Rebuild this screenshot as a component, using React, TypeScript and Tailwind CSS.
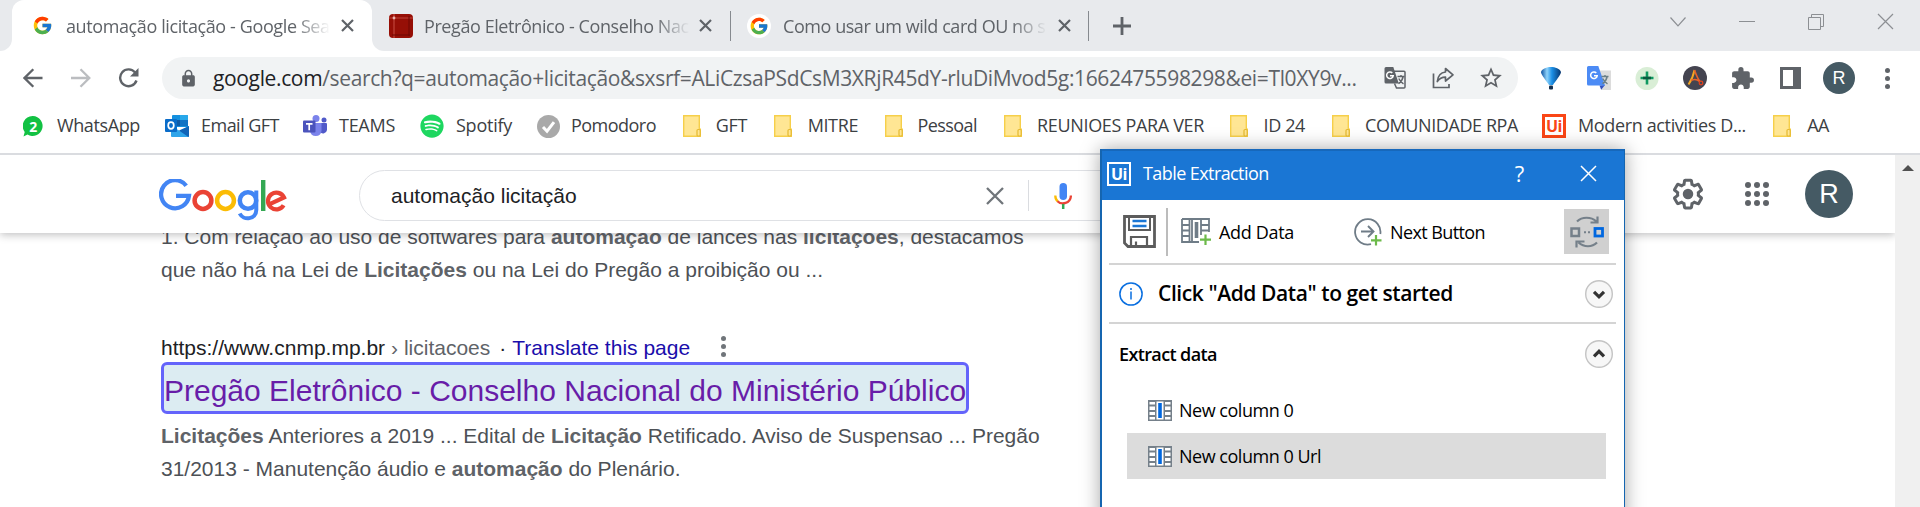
import type { ReactNode } from "react";
import { FcGoogle } from "react-icons/fc";
import { FaSpotify } from "react-icons/fa";
import { MdExtension, MdLock, MdStarBorder } from "react-icons/md";

const ui = "font-['Open_Sans',sans-serif] whitespace-nowrap";
const web = "font-['Liberation_Sans',Arial,sans-serif] whitespace-nowrap";

function Cross({ size, width, className }: { size: number; width: number; className?: string }) {
  return (
    <svg width={size} height={size} viewBox={`0 0 ${size} ${size}`} className={`shrink-0 ${className ?? ""}`}>
      <path d={`M1 1L${size - 1} ${size - 1}M${size - 1} 1L1 ${size - 1}`} stroke="currentColor" strokeWidth={width} />
    </svg>
  );
}

function TabTitle({ children, className }: { children: ReactNode; className: string }) {
  return (
    <span
      className={`${ui} text-[18px] leading-7 text-[#5f6368] [mask-image:linear-gradient(to_right,black_calc(100%-36px),transparent)] ${className}`}
    >
      {children}
    </span>
  );
}

function TabStrip() {
  return (
    <div className="flex h-[51px] bg-[#e8eaed]">
      <div className="flex w-3 items-end bg-white">
        <div className="h-full w-3 rounded-br-xl bg-[#e8eaed]" />
      </div>
      <div className="w-[360px] bg-[#e8eaed]">
        <div className="flex h-full items-center rounded-t-xl bg-white pl-[20px]">
          <FcGoogle size={21} className="shrink-0" />
          <TabTitle className="ml-[13px] w-[264px] tracking-[-0.39px]">automação licitação - Google Sea</TabTitle>
          <Cross size={13} width={2.2} className="ml-[11px] text-[#5f6368]" />
        </div>
      </div>
      <div className="flex flex-1 bg-white">
        <div className="flex flex-1 items-center rounded-bl-xl bg-[#e8eaed]">
          <svg width="24" height="24" viewBox="0 0 24 24" className="ml-[17px] shrink-0">
            <rect width="24" height="24" rx="4" fill="#960f06" />
            <path d="M0 4h24M5 0v24" stroke="#c0453a" strokeWidth="1.2" />
            <path d="M20 2v20M3 21h18" stroke="#6d0903" strokeWidth="1" />
            <circle cx="5" cy="4" r="1.4" fill="#eab4ae" />
          </svg>
          <TabTitle className="ml-[11px] w-[266px] tracking-[-0.42px]">Pregão Eletrônico - Conselho Nac</TabTitle>
          <Cross size={13} width={2.2} className="ml-[9px] text-[#5f6368]" />
          <div className="ml-[18px] h-[30px] w-px bg-[#868a8f]" />
          <div className="ml-[16px] flex size-6 items-center justify-center rounded-full bg-white">
            <FcGoogle size={20} />
          </div>
          <TabTitle className="ml-[12px] w-[264px] tracking-[-0.44px]">Como usar um wild card OU no s</TabTitle>
          <Cross size={13} width={2.2} className="ml-[11px] text-[#5f6368]" />
          <div className="ml-[17px] h-[30px] w-px bg-[#868a8f]" />
          <svg width="18" height="18" viewBox="0 0 18 18" className="ml-[24px]">
            <path d="M9 0v18M0 9h18" stroke="#5f6368" strokeWidth="2.8" />
          </svg>
          <div className="mr-[26px] mb-2 ml-auto flex items-center text-[#8c8f93]">
            <svg width="16" height="10" viewBox="0 0 16 10" fill="none" stroke="currentColor">
              <path d="M.5 .5L8 8.8L15.5 .5" strokeWidth="1.2" />
            </svg>
            <div className="ml-[53px] h-px w-4 bg-[#8c8f93]" />
            <svg width="16" height="16" viewBox="0 0 16 16" fill="none" stroke="currentColor" className="ml-[53px]">
              <path d="M.5 3.5h12v12H.5zM3.5 3V.5h12v12H13" />
            </svg>
            <Cross size={17} width={1.2} className="ml-[53px]" />
          </div>
        </div>
      </div>
    </div>
  );
}

function TranslateIcon({ color }: { color: boolean }) {
  const front = color ? "#4c8bf5" : "#5f6368";
  return (
    <svg width="24" height="24" viewBox="0 0 24 24" className="shrink-0">
      {color ? (
        <>
          <path d="M10 4.5H24V24H14.5z" fill="#dcdcdc" />
          <path d="M12.5 19.5L18 19l-3.800 4.800z" fill="#3452c0" />
        </>
      ) : (
        <path d="M11 5.200h10a1 1 0 011 1V21a1 1 0 01-1 1h-7.500l-2-4.500" fill="none" stroke="#5f6368" strokeWidth="1.500" />
      )}
      <path d={color ? "M1.500 0h9.800l6.700 19.500H1.500A1.500 1.500 0 010 18V1.500A1.500 1.500 0 011.500 0z" : "M3 1h7.300l5.500 16.500H3A1.500 1.500 0 011.500 16V2.500A1.500 1.500 0 013 1z"} fill={front} />
      <path d="M9.300 6.900A3.300 3.300 0 1010.200 9.800H7" fill="none" stroke="#fff" strokeWidth="1.500" />
      <path d="M14.500 10.500h7M18 9v1.500M20.200 10.500c-.6 3-2.200 5.500-4.700 7.200M15.800 12.500c.9 2.200 2.600 4 4.700 5.300" fill="none" stroke={color ? "#6b7f86" : "#5f6368"} strokeWidth="1.400" />
    </svg>
  );
}

function Toolbar() {
  return (
    <div className="flex h-[54px] items-center bg-white text-[#5f6368]">
      <svg width="20" height="20" viewBox="0 0 20 20" fill="none" stroke="#5f6368" strokeWidth="2.300" className="ml-[23px]">
        <path d="M19.500 10H1.500M10.300 1.200L1.500 10l8.800 8.800" />
      </svg>
      <svg width="20" height="20" viewBox="0 0 20 20" fill="none" stroke="#bbbdc0" strokeWidth="2.300" className="ml-[28px]">
        <path d="M0 10h18M9.500 1.200L18.300 10l-8.800 8.800" />
      </svg>
      <svg width="21" height="20" viewBox="0 0 21 20" fill="none" className="ml-[27px]">
        <path d="M17.200 4.600A8.400 8.400 0 1018.500 12.500" stroke="#5f6368" strokeWidth="2.400" />
        <path d="M20.500 0v8.500H12z" fill="#5f6368" />
      </svg>
      <div className="ml-[23px] flex h-[42px] w-[1356px] items-center rounded-full bg-[#f1f3f4]">
        <MdLock size={19} className="ml-[17px] shrink-0" />
        <span className={`${ui} ml-[15px] w-[1164px] text-[21px] leading-[42px] tracking-[-0.36px] text-[#5f6368]`}>
          <span className="text-[#202124]">google.com</span>
          /search?q=automação+licitação&amp;sxsrf=ALiCzsaPSdCsM3XRjR45dY-rluDiMvod5g:1662475598298&amp;ei=Tl0XY9v...
        </span>
        <div className="ml-[6px] flex items-center">
          <TranslateIcon color={false} />
          <svg width="24" height="24" viewBox="0 0 24 24" fill="none" stroke="#5f6368" strokeWidth="1.700" className="ml-[24px]">
            <path d="M2.500 7.500v14h15.500v-3.500" />
            <path d="M14.500 2.500l7.500 6.300-7.500 6.200v-3.800c-3.800 0-6.300 1.500-8.200 4.300.5-4.800 3-9 8.200-9.500z" strokeLinejoin="round" />
          </svg>
          <MdStarBorder size={26} className="ml-[23px]" />
        </div>
      </div>
      <svg width="22" height="24" viewBox="0 0 22 24" className="ml-[22px] shrink-0">
        <defs>
          <linearGradient id="balloon">
            <stop offset="0" stopColor="#0b4f9e" />
            <stop offset=".3" stopColor="#8fd3fb" />
            <stop offset=".55" stopColor="#1b8fe6" />
            <stop offset="1" stopColor="#06356f" />
          </linearGradient>
        </defs>
        <path d="M1 6C2 2.500 7 1 11 1s9 1.500 10 5c0 3-6 9.500-8 13H9C7 15.500 1 9 1 6z" fill="url(#balloon)" />
        <rect x="9" y="19.500" width="4" height="4" rx="1" fill="#15304f" />
      </svg>
      <div className="ml-[25px]">
        <TranslateIcon color />
      </div>
      <svg width="24" height="24" viewBox="0 0 24 24" className="ml-[24px] shrink-0">
        <circle cx="12" cy="12.500" r="11.500" fill="#d9eed6" />
        <path d="M12 5.500v13M5.500 12h13" stroke="#0f9960" strokeWidth="2.600" />
        <path d="M8 12h8" stroke="#0b5a40" strokeWidth="2.600" />
      </svg>
      <svg width="24" height="24" viewBox="0 0 24 24" fill="none" className="ml-[24px] shrink-0">
        <circle cx="12" cy="12" r="12" fill="#444450" />
        <path d="M5.500 18.500C8 15 10.500 9 11.500 4" stroke="#f5a623" strokeWidth="1.900" />
        <path d="M11.500 4c1.500 4.500 3 8.500 5.500 11.500M8 14.500c3-1.500 6-1.300 8.500 1" stroke="#e8622a" strokeWidth="1.600" />
        <circle cx="18" cy="17" r="1.800" stroke="#e0421f" strokeWidth="1.300" />
      </svg>
      <MdExtension size={25} className="ml-[23px] shrink-0" />
      <div className="ml-[25px] h-[22px] w-[21px] shrink-0 border-[3px] border-r-[8px] border-[#5f6368] bg-white" />
      <div className={`ml-[22px] flex size-8 shrink-0 items-center justify-center rounded-full bg-[#455a64] text-[18px] text-white ${web}`}>R</div>
      <div className="ml-[30px] flex flex-col gap-[3px]">
        <i className="size-[5px] rounded-full bg-[#5f6368]" />
        <i className="size-[5px] rounded-full bg-[#5f6368]" />
        <i className="size-[5px] rounded-full bg-[#5f6368]" />
      </div>
    </div>
  );
}

function Folder() {
  return (
    <svg width="18" height="22" viewBox="0 0 18 22" className="shrink-0">
      <path d="M.7.700h15.600v13.500h1v7H.7z" fill="#ffe694" stroke="#f6cf4a" strokeWidth="1.400" />
      <rect x="14" y="14.500" width="3.200" height="6.500" rx="1" fill="#ffe694" stroke="#e5b931" strokeWidth="1.200" />
    </svg>
  );
}

function Bookmark({ icon, label, className }: { icon: ReactNode; label: string; className: string }) {
  return (
    <div className={`flex shrink-0 items-center justify-between ${className}`}>
      {icon}
      <span className={`${ui} pb-[2px] text-[18px] text-[#3c4043]`}>{label}</span>
    </div>
  );
}

function BookmarksBar() {
  return (
    <div className="flex h-[48px] items-center bg-white pb-[6px] pl-[23px]">
      <Bookmark
        className="w-[117px] tracking-[-0.38px]"
        label="WhatsApp"
        icon={
          <svg width="20" height="21" viewBox="0 0 20 21">
            <path d="M10 0a10 10 0 11-5.500 18.600L.5 20.500l1.200-4.600A10 10 0 0110 0z" fill="#12c143" />
            <text x="10" y="15.500" textAnchor="middle" fontSize="14" fontWeight="700" fontFamily="Open Sans" fill="#fff">2</text>
          </svg>
        }
      />
      <Bookmark
        className="ml-[25px] w-[114px] tracking-[-0.53px]"
        label="Email GFT"
        icon={
          <svg width="24" height="22" viewBox="0 0 24 22">
            <path d="M7 1a1 1 0 011-1h14a1 1 0 011 1v11H7z" fill="#1490df" />
            <path d="M15 0h7a1 1 0 011 1v4h-8z" fill="#28a8ea" />
            <path d="M7 5h8v6H7z" fill="#0f5ba7" />
            <path d="M15 5h8v6h-8z" fill="#1273c4" />
            <path d="M6 11l9 5 9-5v10a1 1 0 01-1 1H7a1 1 0 01-1-1z" fill="#2fa5ea" />
            <path d="M24 11v10a1 1 0 01-.6.900L14 15.500z" fill="#0f64b8" />
            <rect y="4" width="12" height="13" rx="1" fill="#0a6cc9" />
            <ellipse cx="6" cy="10.500" rx="2.800" ry="3.300" fill="none" stroke="#fff" strokeWidth="1.700" />
          </svg>
        }
      />
      <Bookmark
        className="ml-[24px] w-[92px] tracking-[-0.27px]"
        label="TEAMS"
        icon={
          <svg width="24" height="22" viewBox="0 0 24 22">
            <circle cx="13" cy="3.500" r="3.500" fill="#7b83eb" />
            <circle cx="21" cy="5" r="2.500" fill="#5059c9" />
            <path d="M17 8h6a1 1 0 011 1v6a4 4 0 01-7 2z" fill="#5059c9" />
            <path d="M7 8h11.500v8a5.800 5.800 0 01-11.500 0z" fill="#7b83eb" />
            <rect y="5.500" width="12.500" height="12" rx="1" fill="#4b53bc" />
            <path d="M3 8.800h6.500M6.200 8.800v6.500" stroke="#fff" strokeWidth="1.700" />
          </svg>
        }
      />
      <Bookmark className="ml-[25px] w-[92px] tracking-[-0.25px]" label="Spotify" icon={<FaSpotify size={24} color="#1ed760" />} />
      <Bookmark
        className="ml-[25px] w-[119px] tracking-[-0.52px]"
        label="Pomodoro"
        icon={
          <svg width="23" height="23" viewBox="0 0 23 23">
            <circle cx="11.500" cy="11.500" r="11.500" fill="#a9a9a9" />
            <path d="M6 12l4 4.200 7-9" fill="none" stroke="#fff" strokeWidth="3" />
          </svg>
        }
      />
      <Bookmark className="ml-[27px] w-[64px] tracking-[-0.38px]" label="GFT" icon={<Folder />} />
      <Bookmark className="ml-[27px] w-[84px] tracking-[-0.38px]" label="MITRE" icon={<Folder />} />
      <Bookmark className="ml-[27px] w-[92px] tracking-[-0.55px]" label="Pessoal" icon={<Folder />} />
      <Bookmark className="ml-[27px] w-[200px] tracking-[-0.33px]" label="REUNIOES PARA VER" icon={<Folder />} />
      <Bookmark className="ml-[26px] w-[75px] tracking-[-0.38px]" label="ID 24" icon={<Folder />} />
      <Bookmark className="ml-[27px] w-[186px] tracking-[-0.41px]" label="COMUNIDADE RPA" icon={<Folder />} />
      <Bookmark
        className="ml-[24px] w-[204px] tracking-[-0.36px]"
        label="Modern activities D..."
        icon={
          <span className="flex size-6 items-center justify-center border-[3px] border-[#fa4616] font-['Open_Sans',sans-serif] text-[16px] leading-none font-bold tracking-[-0.5px] text-[#fa4616]">
            Ui
          </span>
        }
      />
      <Bookmark className="ml-[27px] w-[56px] tracking-[-0.5px]" label="AA" icon={<Folder />} />
    </div>
  );
}

function GoogleLogo() {
  return (
    <svg width="128" height="42" viewBox="0 0 128 42" fill="none" className="shrink-0">
      <path d="M27.200 6.700A14 14 0 1030 16.800H17" stroke="#4285f4" strokeWidth="4.300" />
      <circle cx="44" cy="21.500" r="8.400" stroke="#ea4335" strokeWidth="4.500" />
      <circle cx="66.500" cy="21.500" r="8.400" stroke="#fbbc05" strokeWidth="4.500" />
      <circle cx="89" cy="21.500" r="8.200" stroke="#4285f4" strokeWidth="4.500" />
      <path d="M97.300 11.500v19.500c0 9.500-13 11-16.600 3.500" stroke="#4285f4" strokeWidth="4" />
      <path d="M104.200 1v31" stroke="#34a853" strokeWidth="4.400" />
      <path d="M110.200 25.300L125 18.500A8.400 8.400 0 10124.600 26.300" stroke="#ea4335" strokeWidth="4.200" />
    </svg>
  );
}

function GoogleHeader() {
  return (
    <div className="relative z-10 flex h-[78px] items-center bg-white shadow-[0_2px_8px_rgba(32,33,36,0.28)]">
      <div className="ml-[159px] pt-[11px]">
        <GoogleLogo />
      </div>
      <div className="mt-[3px] ml-[72px] flex h-[51px] w-[860px] items-center rounded-full border border-[#dfe1e5]">
        <span className={`${web} ml-[31px] pt-px text-[21px] text-[#202124]`}>automação licitação</span>
        <Cross size={18} width={2.300} className="ml-[409px] text-[#70757a]" />
        <div className="ml-[24px] h-[31px] w-px bg-[#dadce0]" />
        <svg width="18" height="26" viewBox="0 0 18 26" fill="none" className="ml-[25px]">
          <rect x="5.500" y="0" width="7.500" height="17" rx="3.750" fill="#4285f4" />
          <path d="M1.300 12.500c0 2.800 1 4.700 2.500 6" stroke="#fbbc05" strokeWidth="2.300" />
          <path d="M3.500 18.200c4 4 13.200 2.500 13.400-5.700" stroke="#ea4335" strokeWidth="2.300" />
          <path d="M9.200 21v5" stroke="#34a853" strokeWidth="2.500" />
        </svg>
      </div>
      <svg width="36" height="36" viewBox="0 0 24 24" fill="#5f6368" className="ml-[451px] shrink-0">
        <path d="M13.850 22.250h-3.700c-.74 0-1.360-.54-1.450-1.270l-.27-1.890c-.27-.14-.53-.29-.79-.46l-1.800.72c-.7.260-1.470-.03-1.810-.65L2.200 15.530c-.35-.66-.2-1.440.36-1.880l1.530-1.190c-.01-.15-.02-.3-.02-.46 0-.15.010-.31.020-.46l-1.520-1.190c-.59-.45-.74-1.260-.37-1.880l1.850-3.190c.34-.62 1.110-.9 1.790-.63l1.810.73c.26-.17.52-.32.78-.46l.27-1.910c.09-.7.710-1.250 1.440-1.250h3.700c.74 0 1.360.54 1.450 1.270l.27 1.890c.27.14.53.29.79.46l1.800-.72c.71-.26 1.480.03 1.820.65l1.840 3.180c.36.66.2 1.440-.36 1.880l-1.520 1.190c.01.15.020.3.020.46s-.01.310-.02.460l1.520 1.190c.56.45.72 1.230.37 1.860l-1.860 3.220c-.34.62-1.110.9-1.800.63l-1.800-.72c-.26.17-.52.32-.78.46l-.27 1.910c-.1.680-.72 1.220-1.460 1.220zm-3.230-2h2.760l.37-2.550.53-.22c.44-.18.88-.44 1.340-.78l.45-.34 2.380.96 1.380-2.400-2.030-1.580.07-.56c.03-.26.060-.51.060-.78s-.03-.53-.06-.78l-.07-.56 2.030-1.580-1.390-2.400-2.390.96-.45-.35c-.42-.32-.87-.58-1.330-.77l-.52-.22-.37-2.550h-2.760l-.37 2.550-.53.210c-.44.190-.88.440-1.340.790l-.45.330-2.380-.95-1.390 2.390 2.030 1.580-.07.560a7 7 0 0 0-.06.790c0 .26.020.53.060.78l.07.560-2.030 1.580 1.380 2.400 2.390-.96.45.350c.43.330.86.580 1.330.77l.53.220.38 2.550z" />
        <circle cx="12" cy="12" r="3.500" />
      </svg>
      <div className="ml-[39px] grid grid-cols-3 gap-[3px]">
        {Array.from({ length: 9 }, (_, i) => (
          <i key={i} className="size-[6px] rounded-full bg-[#5f6368]" />
        ))}
      </div>
      <div className={`ml-[36px] flex size-12 items-center justify-center rounded-full bg-[#455a64] text-[27px] text-white ${web}`}>R</div>
    </div>
  );
}

function Results() {
  return (
    <div className={`${web} -mt-[13px] pl-[161px] text-[21px] leading-[33px] text-[#4d5156]`}>
      <p>
        1. Com relação ao uso de softwares para <b className="text-[#5f6368]">automação</b> de lances nas{" "}
        <b className="text-[#5f6368]">licitações</b>, destacamos
      </p>
      <p>
        que não há na Lei de <b className="text-[#5f6368]">Licitações</b> ou na Lei do Pregão a proibição ou ...
      </p>
      <div className="mt-[45px] flex items-center text-[#202124]">
        https://www.cnmp.mp.br
        <span className="ml-[6px] text-[#5f6368]">› licitacoes</span>
        <span className="ml-[9px]">·</span>
        <a className="ml-[6px] text-[#1a0dab]">Translate this page</a>
        <div className="mb-[3px] ml-[31px] flex flex-col gap-[3px]">
          <i className="size-[5px] rounded-full bg-[#70757a]" />
          <i className="size-[5px] rounded-full bg-[#70757a]" />
          <i className="size-[5px] rounded-full bg-[#70757a]" />
        </div>
      </div>
      <h3 className="-mt-[2px] h-[52px] w-[808px] rounded-md border-[3px] border-[#6464fb] bg-[#dcecf2] text-[30px] leading-[52px] text-[#681da8]">
        Pregão Eletrônico - Conselho Nacional do Ministério Público
      </h3>
      <p className="mt-[5px]">
        <b className="text-[#5f6368]">Licitações</b> Anteriores a 2019 ... Edital de <b className="text-[#5f6368]">Licitação</b> Retificado. Aviso de
        Suspensao ... Pregão
      </p>
      <p>
        31/2013 - Manutenção áudio e <b className="text-[#5f6368]">automação</b> do Plenário.
      </p>
    </div>
  );
}

function RoundChevron({ up }: { up?: boolean }) {
  return (
    <svg width="28" height="28" viewBox="0 0 28 28" fill="none" className="mr-[11px] ml-auto">
      <circle cx="14" cy="14" r="13.300" fill="#f7f7f7" stroke="#c4c4c4" strokeWidth="1.400" />
      <path d={up ? "M9 16.300L14 11.300L19 16.300" : "M9 11.800L14 16.800L19 11.800"} stroke="#333" strokeWidth="3.200" />
    </svg>
  );
}

function ColumnIcon() {
  return (
    <svg width="24" height="21" viewBox="0 0 24 21" fill="none" className="shrink-0">
      <path d="M0 0h24v21H0z" fill="#75808a" />
      <path d="M1.500 2h5.500v2.500H1.500zM1.500 6.500h5.500v3.500H1.500zM1.500 12h5.500v3H1.500zM1.500 17h5.500v2.500H1.500zM17 2h5.500v2.500H17zM17 6.500h5.500v3.500H17zM17 12h5.500v3H17zM17 17h5.500v2.500H17zM8.500 1.500h7v18h-7z" fill="#fff" />
      <path d="M10.200 3h3.600v15h-3.600z" fill="#0067df" />
    </svg>
  );
}

function Dialog() {
  return (
    <div className={`absolute top-[149px] left-[1100px] z-20 h-[400px] w-[525px] shadow-[0_0_18px_rgba(0,0,0,0.35)] ${ui} border-r border-l-2 border-[#1565b0] bg-white`}>
      <div className="flex h-[51px] items-center border-t-2 border-[#1768bb] bg-[#1a76d4] pb-[4px] text-white">
        <span className="ml-[5px] flex size-[24px] items-center justify-center border-[2.500px] border-white text-[16px] leading-none font-bold tracking-[-0.5px]">
          Ui
        </span>
        <span className="ml-[12px] text-[18px] tracking-[-0.58px]">Table Extraction</span>
        <span className="ml-[246px] text-[22px]">?</span>
        <Cross size={17} width={1.500} className="ml-[56px]" />
      </div>
      <div className="mr-[8px] ml-[7px] flex h-[65px] items-center border-b-2 border-[#d4d4d4] text-[18px] text-black">
        <svg width="33" height="33" viewBox="0 0 33 33" fill="none" stroke="#5c5c5c" className="ml-[14px]">
          <path d="M1.500 1.500h30v30H5l-3.500-3.500z" strokeWidth="2.800" />
          <path d="M6 2v13h21V2" strokeWidth="2" />
          <path d="M9.500 6h14M9.500 11h14" stroke="#1a76d4" strokeWidth="2.400" />
          <path d="M8 31v-9h16v9M13 31v-4.500" strokeWidth="2.200" />
        </svg>
        <div className="ml-[10px] h-[48px] w-[2px] bg-[#bcbcbc]" />
        <svg width="30" height="28" viewBox="0 0 30 28" fill="none" stroke="#6f7c87" strokeWidth="2" className="ml-[13px]">
          <path d="M1 1h27v13M1 1v23h17M8.500 1v23M11 1v23M20 1v16M1 7h8M1 12.500h8M1 18h8M20 7h8M20 12.500h8" strokeWidth="1.800" />
          <path d="M15.500 4v16" strokeWidth="3.600" />
          <path d="M24.500 16.500V27M19 21.700h11" stroke="#6cba4a" strokeWidth="2.200" />
        </svg>
        <span className="ml-[8px] w-[77px] pt-[2px] tracking-[-0.32px]">Add Data</span>
        <svg width="28" height="28" viewBox="0 0 28 28" fill="none" stroke="#6f7c87" strokeWidth="2" className="ml-[58px]">
          <path d="M26.300 16A12.700 12.700 0 1017 26.200" strokeWidth="1.800" />
          <path d="M7 13.500h12.500M14 8l5.500 5.500L14 19" strokeWidth="1.900" />
          <path d="M22 17v10.500M17 22.300h10.500" stroke="#6cba4a" strokeWidth="2.200" />
        </svg>
        <span className="ml-[8px] pt-[2px] tracking-[-0.6px]">Next Button</span>
        <div className="mr-[7px] ml-auto flex size-[45px] items-center justify-center bg-[#d0d0d0]">
          <svg width="34" height="34" viewBox="0 0 34 34" fill="none" stroke="#75808a">
            <path d="M7 6.500c5-5 14-5 19.500 0M27.500 1.500v6h-7" strokeWidth="2.200" />
            <path d="M27 27.500c-5 5-13 5-18.500 0M6.500 32.500v-6h8" strokeWidth="2.200" />
            <rect x="1.500" y="13.500" width="7.500" height="7.500" strokeWidth="2.500" />
            <rect x="25" y="13.500" width="7.500" height="7.500" stroke="#0067df" strokeWidth="2.800" />
            <path d="M14 17.200h2M18 17.200h2" strokeWidth="2" />
          </svg>
        </div>
      </div>
      <div className="mr-[8px] ml-[7px] flex h-[59px] items-center border-b-2 border-[#d4d4d4] text-black">
        <svg width="24" height="24" viewBox="0 0 24 24" fill="none" stroke="#0a6fe0" className="ml-[10px]">
          <circle cx="12" cy="12" r="11.100" strokeWidth="1.500" />
          <path d="M12 9.500v8M12 6v2" strokeWidth="1.500" />
        </svg>
        <span className="ml-[15px] pt-px text-[21px] font-semibold tracking-[-0.41px]">Click "Add Data" to get started</span>
        <span className="-mr-[8px] ml-auto">
          <RoundChevron />
        </span>
      </div>
      <div className="flex h-[60px] items-center text-black">
        <span className="ml-[17px] pt-px text-[18px] font-semibold tracking-[-0.62px]">Extract data</span>
        <RoundChevron up />
      </div>
      <div className="mr-[18px] ml-[25px] flex flex-col text-[18px] tracking-[-0.48px] text-black">
        <div className="flex h-[49px] items-center pt-[3px] pl-[21px]">
          <ColumnIcon />
          <span className="ml-[7px]">New column 0</span>
        </div>
        <div className="flex h-[46px] items-center bg-[#dcdcdc] pl-[21px]">
          <ColumnIcon />
          <span className="ml-[7px]">New column 0 Url</span>
        </div>
      </div>
    </div>
  );
}

export default function App() {
  return (
    <div className="relative flex h-[507px] w-[1920px] flex-col overflow-hidden bg-white">
      <TabStrip />
      <Toolbar />
      <BookmarksBar />
      <div className="h-[2px] shrink-0 bg-[#dadce0]" />
      <div className="flex flex-1">
        <div className="w-[1895px] overflow-hidden">
          <GoogleHeader />
          <Results />
        </div>
        <div className="flex flex-1 justify-center bg-[#f0f0f0] pt-[10px]">
          <svg width="12" height="6" viewBox="0 0 12 6">
            <path d="M0 6L6 0l6 6z" fill="#505050" />
          </svg>
        </div>
      </div>
      <Dialog />
    </div>
  );
}
